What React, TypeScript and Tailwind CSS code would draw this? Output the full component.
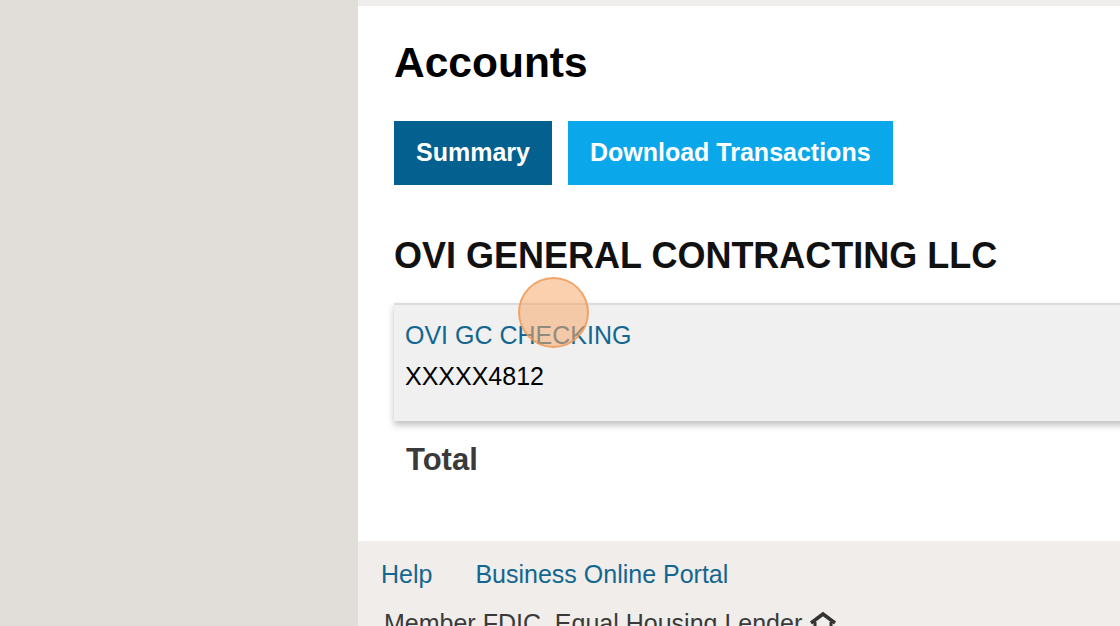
export default function App() {
    return (
        <div className="relative flex h-[626px] w-[1120px] overflow-hidden font-['Liberation_Sans',Arial,sans-serif]">
            <aside className="w-[358px] shrink-0 bg-[#e1ddd8]" />
            <main className="flex min-w-0 grow flex-col">
                <div className="h-[6px] shrink-0 bg-[#f0eeec]" />
                <section className="h-[535px] shrink-0 bg-white pl-[36px] pt-[33px]">
                    <h1 className="text-[42.5px] font-bold leading-[48px] text-black">Accounts</h1>
                    <div className="mt-[34px] flex gap-[16px]">
                        <button className="h-[64px] bg-[#04608f] px-[22px] text-[25px] font-bold text-white">Summary</button>
                        <button className="h-[64px] bg-[#0aa8ea] px-[22px] text-[25px] font-bold text-white">Download Transactions</button>
                    </div>
                    <h2 className="mt-[50px] whitespace-nowrap text-[36px] font-bold leading-[42px] text-[#111]">OVI GENERAL CONTRACTING LLC</h2>
                    <div className="mt-[26px] w-[800px] border-t-2 border-[#dcdcdc] bg-[#f0f0f0] pb-[31px] pl-[11px] pt-[16px] shadow-[0_4px_7px_rgba(0,0,0,0.25)]">
                        <a className="block text-[25px] leading-[28px] text-[#13668f]">OVI GC CHECKING</a>
                        <div className="mt-[13px] text-[25px] leading-[28px] text-black">XXXXX4812</div>
                    </div>
                    <div className="mt-[21px] pl-[12px] text-[31px] font-bold leading-[36px] text-[#3a3a3a]">Total</div>
                </section>
                <footer className="grow bg-[#f0edeb] pl-[23px] pt-[18px]">
                    <div className="flex gap-[43px] text-[25px] leading-[30px] text-[#13668f]">
                        <a>Help</a>
                        <a>Business Online Portal</a>
                    </div>
                    <div className="mt-[19px] flex items-start gap-[6px] pl-[3px] text-[25px] leading-[30px] text-[#3a3a3a]">
                        <span>Member FDIC, Equal Housing Lender</span>
                        <svg width="30" height="26" viewBox="0 0 30 26" className="mt-[3px]">
                            <path d="M3 12 L15 3 L27 12" fill="none" stroke="#333" strokeWidth="3.5" strokeLinejoin="miter" />
                            <path d="M7 11 V24 H23 V11" fill="none" stroke="#333" strokeWidth="3" />
                        </svg>
                    </div>
                </footer>
            </main>
            <div className="absolute left-[518px] top-[277px] h-[71px] w-[71px] rounded-full border-2 border-[rgba(238,150,80,0.75)] bg-[rgba(247,170,110,0.55)]" />
        </div>
    )
}
